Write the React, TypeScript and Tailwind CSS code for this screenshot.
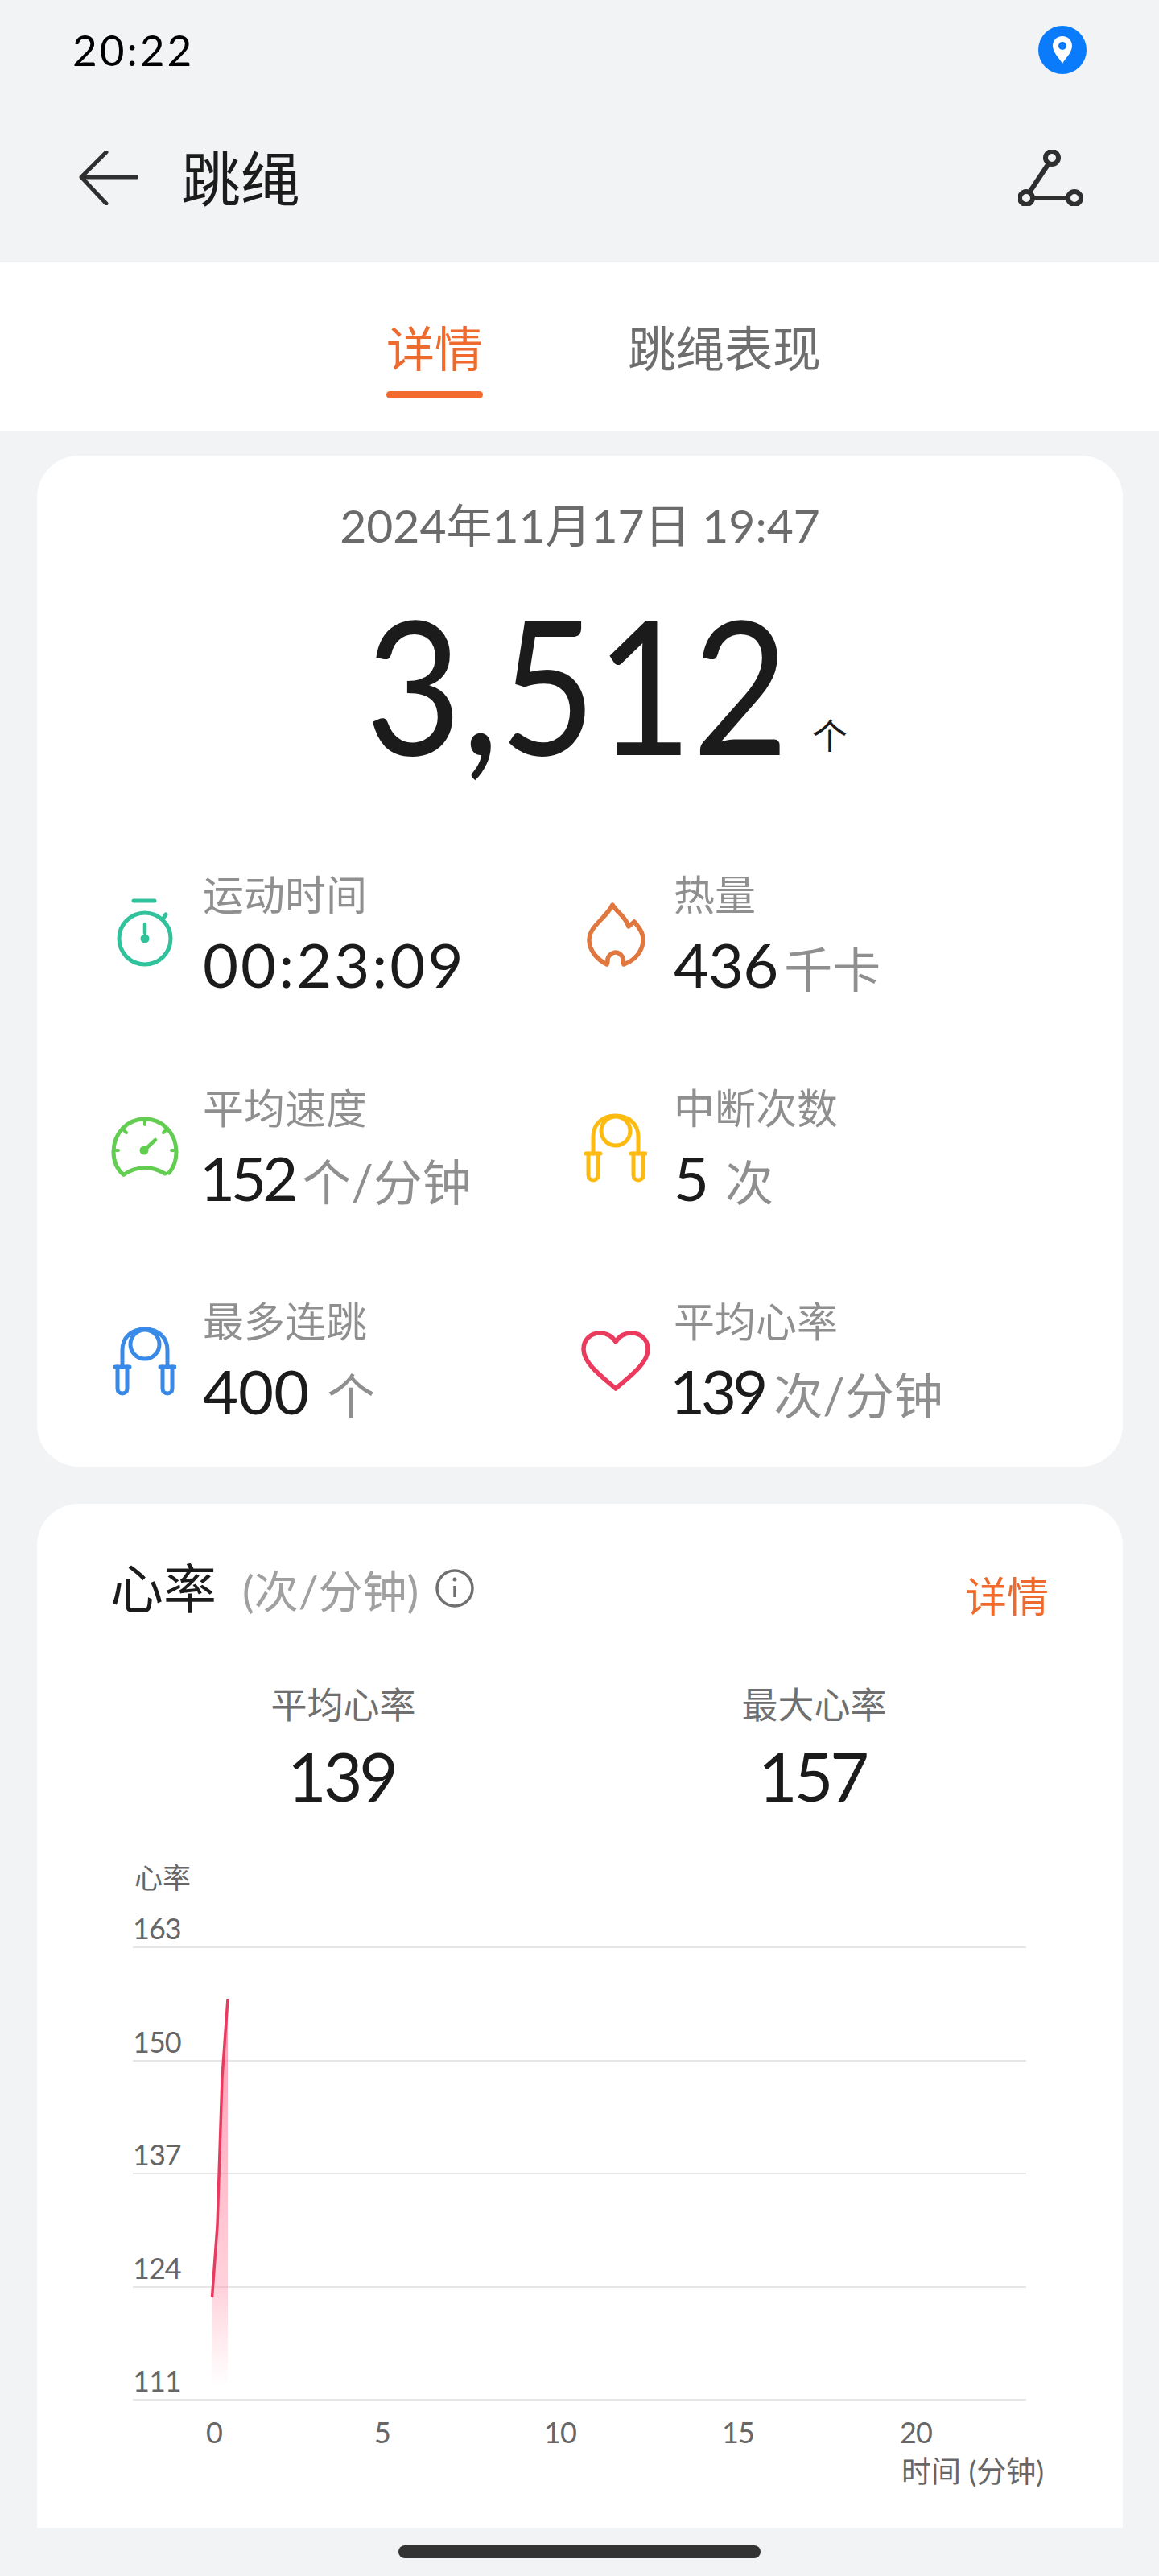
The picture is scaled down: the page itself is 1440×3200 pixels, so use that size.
const sans = "font-['Lato','Noto_Sans_CJK_SC',sans-serif]";

function Stopwatch() {
  return (
    <svg width="80" height="90" viewBox="0 0 80 90" fill="none" stroke="#2fc29b" strokeWidth="5" strokeLinecap="round">
      <path d="M26 3h26" strokeWidth="5" />
      <circle cx="40" cy="50" r="32" />
      <path d="M64 23l2-3" />
      <path d="M40 32v11" strokeWidth="4.5" />
      <circle cx="40" cy="50" r="5.5" fill="#2fc29b" stroke="none" />
    </svg>
  );
}
function Flame() {
  return (
    <svg width="72" height="80" viewBox="0 0 72 80" fill="none" stroke="#e0773f" strokeWidth="5.5" strokeLinecap="round" strokeLinejoin="round">
      <path d="M32 3c4 8 17 15 20 27l7-6c7 8 11 14 11 22 0 14-10 26-24 31-1-1-1-3-1-6 0-5-5-9-9-9s-10 4-10 9c0 3 0 5-1 6C15 72 3 61 3 47 3 29 24 20 32 3z" />
    </svg>
  );
}
function Gauge() {
  return (
    <svg width="84" height="78" viewBox="0 0 84 78" fill="none" stroke="#62cd50" strokeWidth="5" strokeLinecap="round">
      <path d="M15 72C6 64 3 54 3 44 3 21 20 3 42 3s39 18 39 41c0 9-3 19-9 26" />
      <path d="M16 72c16-11 34-11 51-1" />
      <path d="M42 3v7M15 16l4 4M69 16l-4 4M3 42h6M81 42h-6" strokeWidth="4" />
      <circle cx="41" cy="42" r="5.5" fill="#62cd50" stroke="none" />
      <path d="M41 42l14-13" strokeWidth="4.5" />
    </svg>
  );
}
function Rope({ color }: { color: string }) {
  return (
    <svg width="78" height="86" viewBox="0 0 78 86" fill="none" stroke={color} strokeWidth="5" strokeLinecap="round" strokeLinejoin="round">
      <circle cx="39" cy="22" r="18" />
      <path d="M11 50V29C11 13 23 3 39 3s28 10 28 26v21" />
      <path d="M2 50h18M58 50h18" />
      <path d="M5 50v27c0 8 12 8 12 0V50M61 50v27c0 8 12 8 12 0V50" />
    </svg>
  );
}
function Heart() {
  return (
    <svg width="86" height="76" viewBox="0 0 86 76" fill="none" stroke="#ec3a5e" strokeWidth="5.5" strokeLinejoin="round">
      <path d="M43 72C30 60 3 42 3 23 3 11 12 3 23 3c9 0 16 4 20 11C47 7 54 3 63 3c11 0 20 8 20 20 0 19-27 37-40 49z" />
    </svg>
  );
}

function Stat({ icon, label, value, unit, gap, track }: { icon: React.ReactNode; label: string; value: string; unit?: string; gap?: string; track?: string }) {
  return (
    <div className="flex items-center h-[265px]">
      <div className="w-[120px] flex justify-center shrink-0">{icon}</div>
      <div className="ml-[12px]">
        <div className="text-[51px] leading-[60px] text-[#8f8f8f]">{label}</div>
        <div className="flex items-baseline mt-[14px] h-[84px] leading-[84px] whitespace-nowrap">
          <span className={`text-[76px] text-[#1b1b1b] ${track}`}>{value}</span>
          {unit && <span className={`text-[#8f8f8f] ${gap}`}>{unit}</span>}
        </div>
      </div>
    </div>
  );
}

export default function App() {
  const gridY = ["163", "150", "137", "124", "111"];
  return (
    <div className={`w-[1440px] h-[3200px] overflow-hidden bg-[#f1f3f5] ${sans}`}>
      <div className="h-[124px] pl-[90px] pr-[90px] flex items-center justify-between">
        <span className="text-[53px] text-black tracking-[3px]">20:22</span>
        <div className="w-[60px] h-[60px] rounded-full bg-[#0a7cfb] flex items-center justify-center">
          <svg width="26" height="34" viewBox="0 0 26 34">
            <path fillRule="evenodd" fill="#fff" d="M13 0C6 0 1 5 1 12c0 8 8 15 12 22 4-7 12-14 12-22C25 5 20 0 13 0zm0 7a5 5 0 1 1 0 10 5 5 0 0 1 0-10z" />
          </svg>
        </div>
      </div>
      <div className="h-[202px] pb-[8px] pl-[98px] pr-[95px] flex items-center justify-between">
        <div className="flex items-center">
          <svg width="74" height="68" viewBox="0 0 74 68" fill="none" stroke="#2f2f2f" strokeWidth="5" strokeLinecap="round" strokeLinejoin="round">
            <path d="M34 2L3 33h69M3 33l31 33" />
          </svg>
          <span className="ml-[53px] text-[74px] text-[#1c1c1c]">跳绳</span>
        </div>
        <svg width="80" height="70" viewBox="0 0 80 70" fill="none" stroke="#2f2f2f" strokeWidth="6">
          <circle cx="42" cy="10" r="8" />
          <circle cx="10" cy="60" r="8" />
          <circle cx="70" cy="60" r="8" />
          <path d="M38 17L14 53M18 60h44" />
        </svg>
      </div>
      <div className="h-[210px] bg-white pl-[480px] flex items-start pt-[72px] gap-[180px]">
        <div className="relative text-[60px] leading-[70px] text-[#ee6a2d]">
          详情
          <div className="absolute left-0 right-0 top-[88px] h-[9px] rounded-full bg-[#f26a2e]" />
        </div>
        <div className="text-[60px] leading-[70px] text-[#6e6e6e]">跳绳表现</div>
      </div>

      <div className="ml-[46px] w-[1349px] mt-[30px] h-[1256px] bg-white rounded-[52px]">
        <div className="pt-[48px] text-center text-[57px] leading-[76px] text-[#6b6b6b]">2024年11月17日 19:47</div>
        <div className="pl-[408px] mt-[18px] h-[280px] flex items-baseline leading-[280px]">
          <span className="inline-block w-[540px] origin-left scale-x-[0.89] text-[232px] text-[#1b1b1b] whitespace-nowrap">3,512</span>
          <span className="text-[44px] ml-[15px] -translate-y-[7px] text-[#1b1b1b]">个</span>
        </div>
        <div className="pl-[74px] mt-[40px] grid grid-cols-[585px_1fr]">
          <Stat icon={<Stopwatch />} label="运动时间" value="00:23:09" track="tracking-[3px]" />
          <Stat icon={<Flame />} label="热量" value="436" unit="千卡" gap="text-[60px] ml-[8px]" track="tracking-[-1px]" />
          <Stat icon={<Gauge />} label="平均速度" value="152" unit="个/分钟" gap="text-[61px] ml-[10px]" track="tracking-[-5px] ml-[-4px]" />
          <Stat icon={<Rope color="#fdbb12" />} label="中断次数" value="5" unit="次" gap="text-[60px] ml-[20px]" />
          <Stat icon={<Rope color="#3889e8" />} label="最多连跳" value="400" unit="个" gap="text-[60px] ml-[22px]" />
          <Stat icon={<Heart />} label="平均心率" value="139" unit="次/分钟" gap="text-[61px] ml-[12px]" track="tracking-[-5px] ml-[-5px]" />
        </div>
      </div>

      <div className="ml-[46px] w-[1349px] mt-[46px] h-[1272px] bg-white rounded-t-[52px] relative">
        <div className="flex items-center pl-[91px] pr-[92px] pt-[65px] h-[145px]">
          <span className="text-[66px] leading-[80px] text-[#1b1b1b]">心率</span>
          <span className="ml-[32px] mt-[6px] text-[55px] leading-[80px] text-[#a0a0a0]">(次/分钟)</span>
          <svg className="ml-[20px]" width="50" height="50" viewBox="0 0 50 50" fill="none" stroke="#707070" strokeWidth="3.5">
            <circle cx="25" cy="25" r="22" />
            <path d="M25 22v14" />
            <circle cx="25" cy="14" r="2.5" fill="#707070" stroke="none" />
          </svg>
          <span className="ml-auto mt-[20px] text-[52px] leading-[70px] text-[#ee6a2d]">详情</span>
        </div>
        <div className="mt-[75px] flex pl-[88px]">
          <div className="w-[585px] text-center">
            <div className="text-[45px] leading-[60px] text-[#6f6f6f]">平均心率</div>
            <div className="text-[84px] leading-[100px] mt-[8px] tracking-[-4px] mr-[5px] text-[#1b1b1b]">139</div>
          </div>
          <div className="w-[585px] text-center">
            <div className="text-[45px] leading-[60px] text-[#6f6f6f]">最大心率</div>
            <div className="text-[84px] leading-[100px] mt-[8px] tracking-[-4px] mr-[5px] text-[#1b1b1b]">157</div>
          </div>
        </div>

        <div className="relative mt-[53px] ml-[119px] w-[1110px] text-[#666]">
          <div className="text-[35px] leading-[46px] pl-[2px] text-[#666]">心率</div>
          <div className="h-[19px]" />
          {gridY.map((v, i) => (
            <div key={v} className={`border-b-[2px] border-[#e6e6e6] flex items-end ${i === 0 ? "h-[46px]" : "h-[140.5px]"}`}>
              <span className="text-[36px] leading-[46px] tracking-[-1px]">{v}</span>
            </div>
          ))}
          <svg className="absolute left-[90px] top-[146px]" width="40" height="520" viewBox="0 0 40 520" fill="none">
            <defs>
              <linearGradient id="hrfill" x1="0" y1="0" x2="0" y2="1">
                <stop offset="0" stopColor="#ff7f9c" stopOpacity="0.8" />
                <stop offset="0.75" stopColor="#ff8fa8" stopOpacity="0.4" />
                <stop offset="1" stopColor="#ff9db2" stopOpacity="0" />
              </linearGradient>
            </defs>
            <path d="M8.5 399L15 310L21 126L28 28V510H8.5Z" fill="url(#hrfill)" />
            <path d="M8.5 399L15 310L21 126L28 28" stroke="#e93a60" strokeWidth="3.5" />
          </svg>
          <div className="flex h-[62px] items-end text-[36px] leading-[46px] tracking-[-1px]">
            <span className="w-[209px] pl-[91px]">0</span>
            <span className="w-[211px] pl-[91px]">5</span>
            <span className="w-[221px] pl-[91px]">10</span>
            <span className="w-[221px] pl-[91px]">15</span>
            <span className="pl-[91px]">20</span>
          </div>
          <div className="pl-[955px] mt-[2px] text-[37px] leading-[48px] whitespace-nowrap">时间 (分钟)</div>
        </div>
      </div>

      <div className="mt-[22px] mx-auto w-[450px] h-[16px] rounded-full bg-[#333333]" />
    </div>
  );
}
